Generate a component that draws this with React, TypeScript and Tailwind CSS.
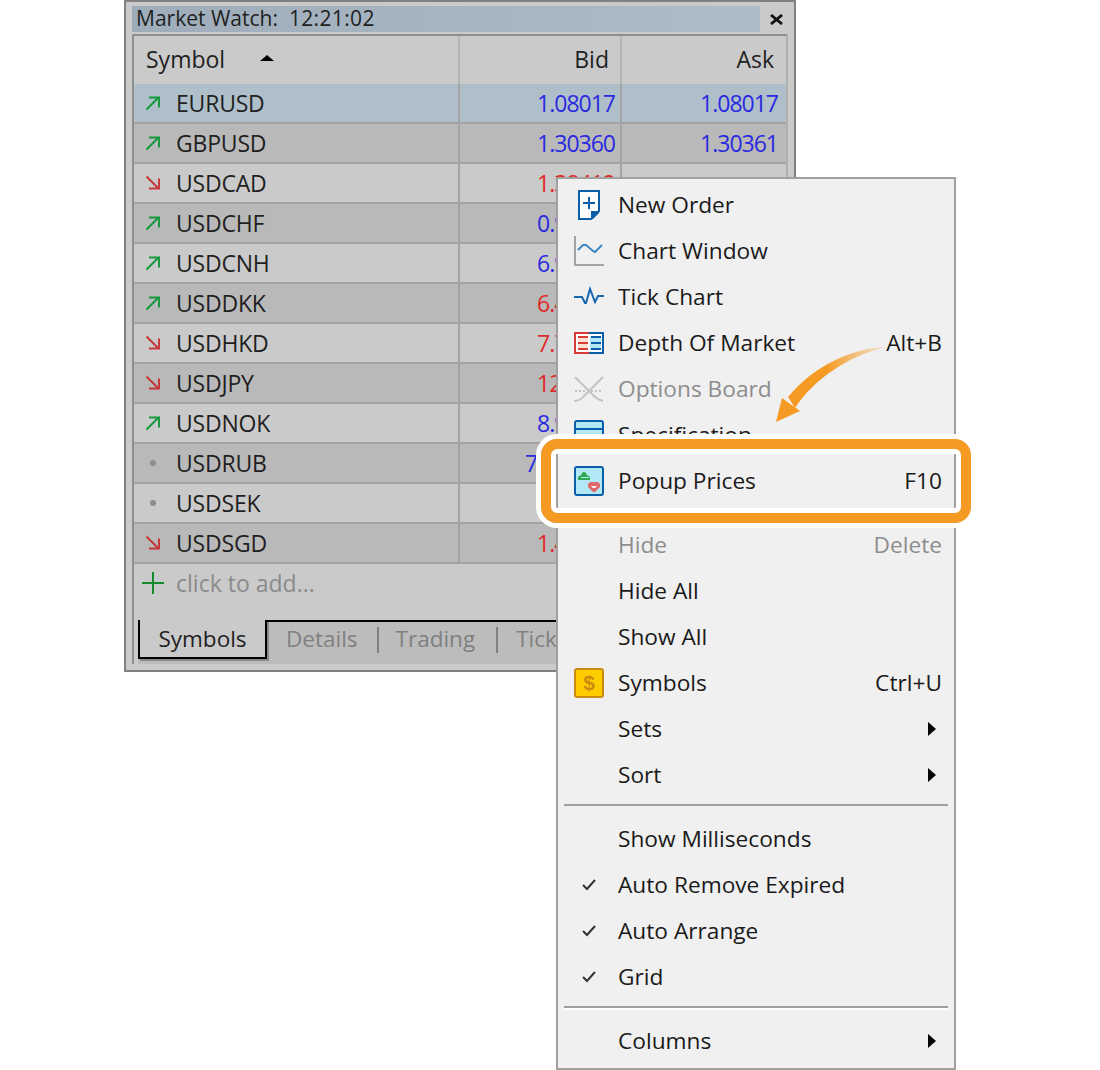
import type { ReactNode } from 'react'

const FONT = { fontFamily: '"Open Sans", "Noto Sans", sans-serif' }

type Row = { sym: string; dir: 'up' | 'down' | 'none'; bid: string; ask: string; bidUp: boolean }

const ROWS: Row[] = [
  { sym: 'EURUSD', dir: 'up', bid: '1.08017', ask: '1.08017', bidUp: true },
  { sym: 'GBPUSD', dir: 'up', bid: '1.30360', ask: '1.30361', bidUp: true },
  { sym: 'USDCAD', dir: 'down', bid: '1.38412', ask: '', bidUp: false },
  { sym: 'USDCHF', dir: 'up', bid: '0.96511', ask: '', bidUp: true },
  { sym: 'USDCNH', dir: 'up', bid: '6.92180', ask: '', bidUp: true },
  { sym: 'USDDKK', dir: 'up', bid: '6.45120', ask: '', bidUp: false },
  { sym: 'USDHKD', dir: 'down', bid: '7.75230', ask: '', bidUp: false },
  { sym: 'USDJPY', dir: 'down', bid: '123.456', ask: '', bidUp: false },
  { sym: 'USDNOK', dir: 'up', bid: '8.91240', ask: '', bidUp: true },
  { sym: 'USDRUB', dir: 'none', bid: '72.34560', ask: '', bidUp: true },
  { sym: 'USDSEK', dir: 'none', bid: '', ask: '', bidUp: true },
  { sym: 'USDSGD', dir: 'down', bid: '1.41230', ask: '', bidUp: false },
]

function DirIcon({ dir }: { dir: Row['dir'] }) {
  if (dir === 'none') return <span className="block w-[6px] h-[6px] rounded-full bg-[#8c8c8c] ml-[5px]" />
  if (dir === 'up')
    return (
      <svg width="16" height="16" viewBox="0 0 16 16" fill="none" stroke="#149a3c" strokeWidth="2">
        <path d="M1.5 14.5 13.5 2.5M4 2.5h10v10" />
      </svg>
    )
  return (
    <svg width="16" height="16" viewBox="0 0 16 16" fill="none" stroke="#c8373c" strokeWidth="2">
      <path d="M1.5 1.5 13.5 13.5M4 13.5h10v-10" />
    </svg>
  )
}

const NewOrderIcon = () => (
  <svg width="30" height="30" viewBox="0 0 30 30">
    <path d="M5 1h20v20l-8 8H5z" fill="#fff" stroke="#0a5ea8" strokeWidth="2" />
    <path d="M25 21v2l-6 6h-2v-8z" fill="#0a5ea8" />
    <path d="M9 13h12M15 7v12" stroke="#0a5ea8" strokeWidth="2" />
  </svg>
)

const ChartIcon = () => (
  <svg width="30" height="30" viewBox="0 0 30 30" fill="none">
    <path d="M1 0v29h29" stroke="#a3a3a3" strokeWidth="2" />
    <path d="M4 14l5-5 3 0 7 6 2 1 7-7" stroke="#3f86c2" strokeWidth="2" />
  </svg>
)

const TickIcon = () => (
  <svg width="30" height="30" viewBox="0 0 30 30" fill="none">
    <path d="M0 15h8l3 6h1l4-14 5 13 3-6h6" stroke="#1668ae" strokeWidth="2" />
  </svg>
)

const DepthIcon = () => (
  <svg width="30" height="30" viewBox="0 0 30 30">
    <rect x="3" y="6" width="12" height="18" fill="#fde0cf" />
    <rect x="15" y="6" width="12" height="18" fill="#b2e8f5" />
    <path d="M15 5H1v20h14" fill="none" stroke="#d93a36" strokeWidth="2" />
    <path d="M15 5h14v20H15" fill="none" stroke="#0a5ea8" strokeWidth="2" />
    <path d="M4 9h10M4 15h10M4 21h10" stroke="#d93a36" strokeWidth="2" />
    <path d="M17 9h10M17 15h10M17 21h10" stroke="#0a5ea8" strokeWidth="2" />
    <path d="M2 6h26v2H2zM2 22h26v2H2zM2 6h2v18H2zM14 6h2v18h-2z" fill="#fff" />
  </svg>
)

const OptionsIcon = () => (
  <svg width="30" height="30" viewBox="0 0 30 30" fill="none" stroke="#c4c4c4" strokeWidth="2">
    <path d="M1 3 20 22Q24 26 29 27M29 3 10 22Q6 27 0 27" />
    <path d="M1 17h28" strokeDasharray="2 2" />
  </svg>
)

const SpecIcon = () => (
  <svg width="30" height="30" viewBox="0 0 30 30">
    <rect x="1" y="1" width="28" height="28" rx="2" fill="#b2e8f5" stroke="#0a5ea8" strokeWidth="2" />
    <path d="M1 9h28" stroke="#0a5ea8" strokeWidth="2" />
  </svg>
)

const PopupIcon = () => (
  <svg width="30" height="30" viewBox="0 0 30 30">
    <rect x="1" y="1" width="28" height="28" rx="2" fill="#b2e8f5" stroke="#0a5ea8" strokeWidth="2" />
    <path d="M4 14v-3l3-2 2-3h2l2 3 3 2v3z" fill="#2ea84f" />
    <path d="M7 11h8v1H7z" fill="#b2e8f5" />
    <path d="M14 18l2-2h8l2 2v3l-5 5h-2l-5-5z" fill="#e0686a" />
    <path d="M17 20h6l-2 2h-2z" fill="#fff" />
  </svg>
)

const SymbolsIcon = () => (
  <svg width="30" height="30" viewBox="0 0 30 30">
    <rect x="1" y="1" width="28" height="28" rx="2" fill="#ffcc00" stroke="#c98c10" strokeWidth="2" />
    <text x="15" y="22" textAnchor="middle" fontSize="21" fontWeight="700" fill="#c98c10" fontFamily="Liberation Sans">$</text>
  </svg>
)

const Check = () => (
  <svg width="14" height="12" viewBox="0 0 14 12" fill="none" stroke="#333" strokeWidth="2">
    <path d="M1 6l4 4 8-9" />
  </svg>
)

const SubArrow = () => <span className="block w-0 h-0 border-y-[7px] border-y-transparent border-l-[8px] border-l-black" />

function Item({ label, icon, keys, sub, dim }: { label: string; icon?: ReactNode; keys?: string; sub?: boolean; dim?: boolean }) {
  return (
    <div className={`h-[46px] flex items-center ${dim ? 'text-[#8d8d8d]' : 'text-[#1a1a1a]'}`}>
      <div className="w-[62px] mr-[-2px] flex items-center justify-center shrink-0">{icon}</div>
      <span className="flex-1">{label}</span>
      {keys && <span className="pr-[12px]">{keys}</span>}
      {sub && <span className="pr-[18px]"><SubArrow /></span>}
    </div>
  )
}

function Sep({ white }: { white?: boolean }) {
  return (
    <div className="h-[18px] px-[6px] pt-[6px]">
      <div className="h-[2px] bg-[#a0a0a0]" />
      {white && <div className="h-[2px] bg-white" />}
    </div>
  )
}

export default function App() {
  return (
    <div className="relative w-[1100px] h-[1070px] bg-white overflow-hidden text-[23px] leading-none" style={FONT}>
      {/* market watch window */}
      <div className="ml-[124px] w-[672px] h-[672px] border-2 border-[#808080] bg-[#cacaca] pt-[4px] pl-[6px] pr-[6px] text-[#1f1f1f]">
        <div className="h-[26px] w-[660px] flex items-center">
          <div className="w-[628px] h-full bg-gradient-to-r from-[#9fadba] to-[#aebcc8] pl-[4px] pb-[1px] flex items-center text-[21px]">
            <span>Market Watch:</span>
            <span className="ml-[11px] tracking-[0.35px]">12:21:02</span>
          </div>
          <div className="flex-1 flex justify-center">
            <svg width="13" height="11" viewBox="0 0 13 11" stroke="#111" strokeWidth="2.8">
              <path d="M1 1l11 9M12 1 1 10" />
            </svg>
          </div>
        </div>

        <div className="mt-[2px] border-t-2 border-l-2 border-r-2 border-t-[#8f8f8f] border-l-[#8f8f8f] border-r-[#b0b0b0] w-[656px]">
          <div className="h-[48px] flex items-center">
            <div className="w-[326px] h-full flex items-center pl-[12px] pb-[2px] border-r-2 border-[#b5b5ae]">
              <span>Symbol</span>
              <span className="ml-[35px] mt-[-2px] w-0 h-0 border-x-[7px] border-x-transparent border-b-[6px] border-b-black" />
            </div>
            <div className="w-[162px] h-full flex items-center justify-end pr-[11px] pb-[2px] border-r-2 border-[#b5b5ae]">Bid</div>
            <div className="flex-1 h-full flex items-center justify-end pr-[12px] pb-[2px]">Ask</div>
          </div>
          {ROWS.map((r, i) => (
            <div
              key={r.sym}
              className={`h-[40px] flex items-center border-b-2 border-[#a3a3a3] ${
                i === 0 ? 'bg-[#afbfca]' : i % 2 === 1 ? 'bg-[#b9b9b9]' : 'bg-[#cacaca]'
              }`}
            >
              <div className="w-[326px] h-full flex items-center pl-[11px] border-r-2 border-[#a3a3a3] tracking-[-0.2px]">
                <span className="w-[31px] flex items-center"><DirIcon dir={r.dir} /></span>
                <span>{r.sym}</span>
              </div>
              <div className={`w-[162px] h-full flex items-center justify-end pr-[5px] border-r-2 border-[#a3a3a3] tracking-[-1px] ${r.bidUp ? 'text-[#2a2ae0]' : 'text-[#e02a2a]'}`}>
                {r.bid}
              </div>
              <div className={`flex-1 h-full flex items-center justify-end pr-[8px] tracking-[-1px] ${r.bidUp ? 'text-[#2a2ae0]' : 'text-[#e02a2a]'}`}>
                {r.ask}
              </div>
            </div>
          ))}
          <div className="h-[56px] flex items-center pl-[8px] pb-[18px] text-[#8a8a8a]">
            <svg width="22" height="22" viewBox="0 0 22 22" stroke="#168a2e" strokeWidth="2" className="mr-[12px]">
              <path d="M0 11h22M11 0v22" />
            </svg>
            click to add...
          </div>
          <div className="h-[44px] bg-[#bcbcbc] flex items-start text-[#808080] text-[22.5px]">
            <div className="w-[4px] h-[44px] bg-[#cacaca]" />
            <div className="w-[129px] h-[39px] pt-[2px] bg-[#cacaca] border-2 border-t-0 border-black text-[#1f1f1f] flex items-center justify-center shadow-[2px_2px_0_#8a8a8a]">
              Symbols
            </div>
            <div className="flex-1 h-[37px] border-t-2 border-black flex items-center pl-[19px]">
              <span>Details</span>
              <span className="w-[2px] h-[26px] bg-[#808080] ml-[19px] mr-[17px]" />
              <span>Trading</span>
              <span className="w-[2px] h-[26px] bg-[#808080] ml-[21px] mr-[18px]" />
              <span>Ticks</span>
            </div>
          </div>
        </div>
      </div>

      {/* context menu */}
      <div className="absolute left-[556px] top-[177px] w-[400px] h-[893px] bg-[#f0f0f0] border-2 border-b-0 border-[#a0a0a0] pt-[3px] text-[22.7px]">
        <Item label="New Order" icon={<NewOrderIcon />} />
        <Item label="Chart Window" icon={<ChartIcon />} />
        <Item label="Tick Chart" icon={<TickIcon />} />
        <Item label="Depth Of Market" icon={<DepthIcon />} keys="Alt+B" />
        <Item label="Options Board" icon={<OptionsIcon />} dim />
        <Item label="Specification" icon={<SpecIcon />} />
        <Item label="Popup Prices" icon={<PopupIcon />} keys="F10" />
        <Sep />
        <Item label="Hide" keys="Delete" dim />
        <Item label="Hide All" />
        <Item label="Show All" />
        <Item label="Symbols" icon={<SymbolsIcon />} keys="Ctrl+U" />
        <Item label="Sets" sub />
        <Item label="Sort" sub />
        <Sep />
        <Item label="Show Milliseconds" />
        <Item label="Auto Remove Expired" icon={<Check />} />
        <Item label="Auto Arrange" icon={<Check />} />
        <Item label="Grid" icon={<Check />} />
        <Sep white />
        <Item label="Columns" sub />
        <div className="absolute left-[-2px] right-[-2px] bottom-0 h-[2px] bg-[#a0a0a0]" />
      </div>

      {/* callout */}
      <div className="absolute left-[541px] top-[439px] w-[430px] h-[84px] rounded-[16px] border-[10px] border-[#f59a23] shadow-[0_0_0_5px_#fff,inset_0_0_0_5px_#fff]" />
      <svg className="absolute left-[770px] top-[340px]" width="120" height="90" viewBox="0 0 120 90">
        <defs>
          <linearGradient id="tail" gradientUnits="userSpaceOnUse" x1="112" y1="7" x2="55" y2="28">
            <stop offset="0" stopColor="#f59a23" stopOpacity="0.2" />
            <stop offset="1" stopColor="#f59a23" stopOpacity="1" />
          </linearGradient>
        </defs>
        <path d="M112 7C80 10 45 25 18 57L25 68C45 38 78 17 112 8Z" fill="url(#tail)" />
        <path d="M6 82 12 58 30 71Z" fill="#f59a23" />
      </svg>
    </div>
  )
}
